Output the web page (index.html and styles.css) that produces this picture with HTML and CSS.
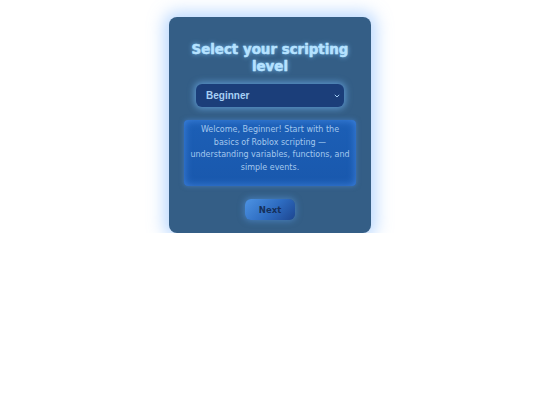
FILE: index.html
```html
<!DOCTYPE html>
<html>
<head>
<meta charset="utf-8">
<link rel="stylesheet" href="styles.css">
</head>
<body>
<div class="card">
  <h1 class="title">Select your scripting level</h1>
  <div class="select">
    <span class="select-label">Beginner</span>
    <svg class="chev" width="6" height="4" viewBox="0 0 6 4"><path d="M0.8 0.8 L3 3 L5.2 0.8" fill="none" stroke="#a5cff5" stroke-width="1"/></svg>
  </div>
  <div class="desc">Welcome, Beginner! Start with the basics of Roblox scripting — understanding variables, functions, and simple events.</div>
  <button class="next">Next</button>
</div>
</body>
</html>
```
FILE: styles.css
```css
html, body {
  margin: 0;
  padding: 0;
  background: #ffffff;
}
body {
  padding-top: 17px;
  font-family: "DejaVu Sans", Verdana, sans-serif;
}
.card {
  width: 202px;
  height: 216px;
  box-sizing: border-box;
  margin: 0 auto;
  background: #345e86;
  border-radius: 8px;
  box-shadow: 0 0 16px 5px rgba(120, 180, 255, 0.5);
  padding: 24px 15px 0;
  display: flex;
  flex-direction: column;
  align-items: center;
}
.title {
  margin: 0;
  font-size: 13.4px;
  line-height: 17px;
  font-weight: bold;
  text-align: center;
  color: #b5e2ff;
  text-shadow: 0 0 5px rgba(130, 200, 255, 0.9), 0 0 1px rgba(180, 225, 255, 0.8);
  -webkit-text-stroke: 0.3px #b5e2ff;
}
.select {
  margin-top: 9px;
  width: 148px;
  height: 23px;
  box-sizing: border-box;
  background: #1b3e7a;
  border-radius: 6px;
  box-shadow: 0 0 6px 2px rgba(120, 190, 255, 0.55);
  display: flex;
  align-items: center;
  justify-content: space-between;
  padding: 0 4px 0 10px;
}
.select-label {
  font-family: "Liberation Sans", Arial, sans-serif;
  font-weight: bold;
  font-size: 10px;
  color: #a8d0f5;
}
.desc {
  margin-top: 13px;
  width: 172px;
  height: 66px;
  box-sizing: border-box;
  background: linear-gradient(180deg, #1c5fb6 0%, #1958ad 100%);
  border-radius: 4px;
  box-shadow: inset 0 0 8px rgba(90, 160, 255, 0.6), 0 0 5px rgba(80, 150, 240, 0.5);
  padding: 4px 6px;
  font-size: 8px;
  line-height: 12.5px;
  text-align: center;
  color: #a4c8ee;
}
.next {
  margin-top: 13px;
  width: 50px;
  height: 21px;
  border: none;
  border-radius: 6px;
  background: linear-gradient(135deg, #4d93e3 0%, #2d6bc0 55%, #1d4690 100%);
  box-shadow: 0 0 6px 1px rgba(90, 160, 240, 0.5);
  font-family: "DejaVu Sans", Verdana, sans-serif;
  font-weight: bold;
  font-size: 8.5px;
  color: #15305c;
  padding: 0;
}
```
